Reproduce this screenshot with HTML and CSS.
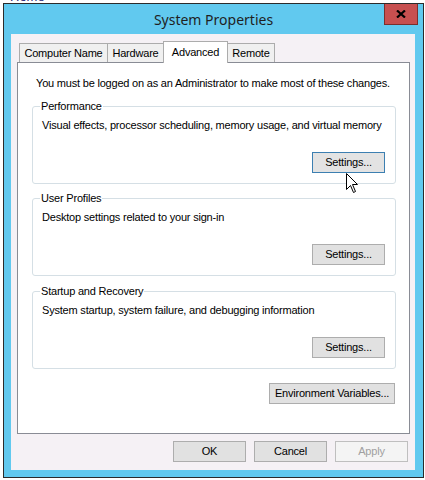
FILE: index.html
```html
<!DOCTYPE html>
<html>
<head>
<meta charset="utf-8">
<title>System Properties</title>
<link rel="stylesheet" href="styles.css">
</head>
<body>
<div class="desktop-text">Home</div>
<div class="window">
  <div class="titlebar">
    <span class="title">System Properties</span>
    <button class="close" aria-label="Close">
      <svg width="10" height="8" viewBox="0 0 10 8"><path d="M1 0.5 L9 7.5 M9 0.5 L1 7.5" stroke="#000" stroke-width="2.2" fill="none"/></svg>
    </button>
  </div>
  <div class="client">
    <div class="tabs">
      <div class="tab tab-cn">Computer Name</div>
      <div class="tab tab-hw">Hardware</div>
      <div class="tab tab-adv active">Advanced</div>
      <div class="tab tab-rem">Remote</div>
    </div>
    <div class="panel">
      <p class="note">You must be logged on as an Administrator to make most of these changes.</p>
      <div class="group group-first">
        <span class="legend">Performance</span>
        <p class="desc">Visual effects, processor scheduling, memory usage, and virtual memory</p>
        <div class="group-actions"><button class="btn btn-hot">Settings...</button></div>
      </div>
      <div class="group group-second">
        <span class="legend">User Profiles</span>
        <p class="desc">Desktop settings related to your sign-in</p>
        <div class="group-actions"><button class="btn">Settings...</button></div>
      </div>
      <div class="group group-third">
        <span class="legend">Startup and Recovery</span>
        <p class="desc">System startup, system failure, and debugging information</p>
        <div class="group-actions"><button class="btn">Settings...</button></div>
      </div>
      <div class="env-row"><button class="btn btn-env">Environment Variables...</button></div>
    </div>
    <div class="footer">
      <button class="btn">OK</button>
      <button class="btn">Cancel</button>
      <button class="btn btn-disabled" disabled>Apply</button>
    </div>
  </div>
</div>
<svg class="cursor" width="13" height="21" viewBox="0 0 13 21"><path d="M0.5 0.5 L0.5 16.5 L4.5 12.5 L7.5 19.5 L9.5 18.5 L6.5 11.5 L11.5 11.5 Z" fill="#fff" stroke="#000" stroke-width="1" stroke-linejoin="miter"/></svg>
</body>
</html>
```
FILE: styles.css
```css
html, body {
  margin: 0;
  padding: 0;
}
body {
  width: 425px;
  height: 480px;
  background: #ffffff;
  position: relative;
  overflow: hidden;
  font-family: "Liberation Sans", Arial, sans-serif;
  font-size: 11px;
  letter-spacing: -0.2px;
  color: #000;
}
.desktop-text {
  position: absolute;
  left: 10px;
  top: -10px;
  font-size: 13px;
  line-height: 13px;
  letter-spacing: 0;
  color: #1e1e78;
}
.window {
  position: absolute;
  left: 3px;
  top: 3px;
  width: 421px;
  height: 475px;
  box-sizing: border-box;
  border: 1px solid #2b2b2b;
  background: #61c9ef;
  padding: 0 8px 7px 7px;
  display: flex;
  flex-direction: column;
}
.titlebar {
  height: 30px;
  margin: 0 -8px 0 -7px;
  display: grid;
  grid-template-columns: 1fr auto 1fr;
}
.title {
  grid-column: 2;
  font-family: "Noto Sans", "Open Sans", sans-serif;
  font-size: 14px;
  letter-spacing: 0;
  line-height: 31px;
  color: #1f1f1f;
}
.close {
  grid-column: 3;
  justify-self: end;
  align-self: start;
  width: 34px;
  height: 21px;
  margin-right: 5px;
  padding: 0;
  border: 1px solid #7b2f2d;
  border-top: none;
  background: #c75050;
  display: flex;
  align-items: center;
  justify-content: center;
}
.close svg {
  display: block;
  margin-top: -1px;
}
.client {
  width: 404px;
  height: 436px;
  box-sizing: border-box;
  background: #f5f1f5;
  padding: 7px 5px 0 6px;
  display: flex;
  flex-direction: column;
}
.tabs {
  height: 21px;
  display: flex;
  align-items: flex-start;
  padding-left: 2px;
  position: relative;
  z-index: 1;
}
.tab {
  box-sizing: border-box;
  height: 19px;
  margin-top: 2px;
  border: 1px solid #acacac;
  border-bottom: none;
  background: #f0f0f0;
  text-align: center;
  line-height: 18px;
  margin-left: -1px;
  white-space: nowrap;
}
.tab-cn { width: 89px; margin-left: 0; }
.tab-hw { width: 57px; }
.tab-adv { width: 65px; }
.tab-rem { width: 48px; }
.tab.active {
  height: 22px;
  margin-top: 0;
  background: #ffffff;
  line-height: 20px;
  position: relative;
  z-index: 2;
}
.panel {
  box-sizing: border-box;
  height: 372px;
  border: 1px solid #898c95;
  background: #ffffff;
  padding: 14px 13px 0 14px;
  display: flex;
  flex-direction: column;
}
.note {
  margin: 0;
  padding-left: 4px;
  line-height: 13px;
  white-space: nowrap;
}
.group {
  box-sizing: border-box;
  height: 78px;
  border: 1px solid #d5dfe5;
  border-radius: 3px;
  padding: 0 10px 10px 9px;
  display: flex;
  flex-direction: column;
}
.group-first { margin-top: 16px; }
.group-second { margin-top: 14px; }
.group-third { margin-top: 15px; }
.legend {
  align-self: flex-start;
  margin-top: -7px;
  margin-left: -2px;
  padding: 0 1px;
  line-height: 13px;
  background: #ffffff;
}
.desc {
  margin: 6px 0 0 0;
  line-height: 13px;
  white-space: nowrap;
}
.group-actions {
  margin-top: 20px;
  display: flex;
  justify-content: flex-end;
}
.btn {
  box-sizing: border-box;
  width: 73px;
  height: 21px;
  padding: 0;
  border: 1px solid #adadad;
  background: #e1e1e1;
  font-family: "Liberation Sans", Arial, sans-serif;
  font-size: 11px;
  letter-spacing: -0.2px;
  color: #000;
  line-height: 19px;
  white-space: nowrap;
}
.btn-hot {
  border-color: #3c7fb1;
  background: #e3e3e3;
}
.env-row {
  margin-top: 14px;
  display: flex;
  justify-content: flex-end;
  padding-right: 1px;
}
.btn-env {
  width: 126px;
}
.footer {
  margin-top: 7px;
  display: flex;
  justify-content: flex-end;
  gap: 8px;
  padding-right: 2px;
}
.btn-disabled {
  background: #f4f4f4;
  border-color: #bfbfbf;
  color: #a0a0a0;
}
.cursor {
  position: absolute;
  left: 346px;
  top: 173px;
}
```
